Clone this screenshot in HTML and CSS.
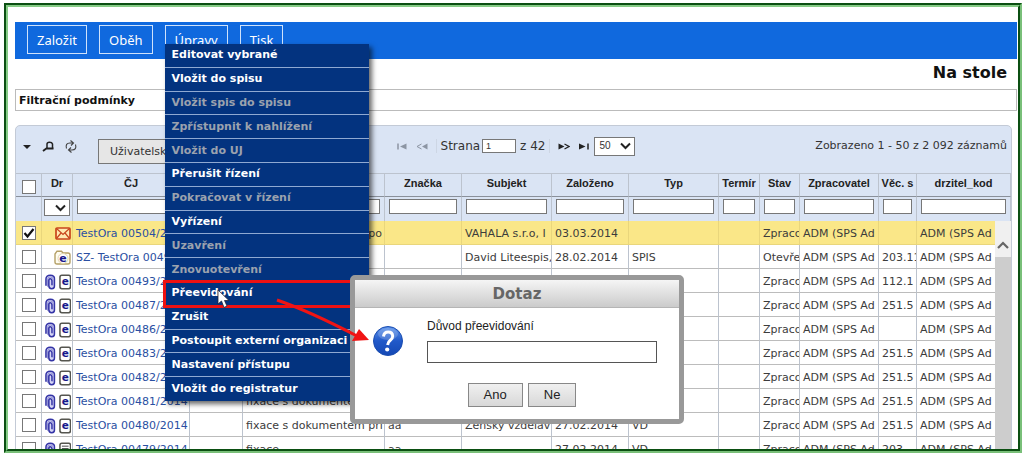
FILE: index.html
```html
<!DOCTYPE html>
<html lang="cs">
<head>
<meta charset="utf-8">
<title>Na stole</title>
<link rel="stylesheet" href="styles.css">
</head>
<body>
<svg class="defs" aria-hidden="true">
  <symbol id="clip" viewBox="0 0 11 16"><path d="M1 12V5Q1 1 5.500 1T10 5V12Q10 15 7 15T4 12V6.500Q4 4.500 5.500 4.500T7.300 6.500V11.500" fill="#d5d5f5" stroke="#3434a6" stroke-width="1.600"/><path d="M2.600 13V5.500Q2.600 2.700 5.500 2.700T8.600 5.500V12" fill="none" stroke="#7c7ccb" stroke-width=".8"/></symbol>
  <symbol id="edoc" viewBox="0 0 13 16"><rect x="1" y="1" width="11" height="14" rx="2" fill="#fff" stroke="#55554f" stroke-width="1.600"/><text x="6.500" y="11.500" class="glyph-e">e</text></symbol>
  <symbol id="paper" viewBox="0 0 13 16"><rect x="1" y="1" width="11" height="14" rx="2" fill="#fff" stroke="#55554f" stroke-width="1.600"/><path d="M3 4h7M3 6.500h7M3 9h7M3 11.500h5" stroke="#444"/></symbol>
  <symbol id="folder" viewBox="0 0 17 15"><path d="M1 12V4L3 1.200H7.500L9 3H14Q16 3 16 5V12Q16 14 14 14H3Q1 14 1 12Z" fill="#fffdf2" stroke="#b5a066" stroke-width="1.400"/><circle cx="9" cy="8.500" r="5" fill="#fff" stroke="#e0d5ae"/><text x="9" y="12" class="glyph-e">e</text></symbol>
  <symbol id="mail" viewBox="0 0 16 13"><rect x="1" y="1" width="14" height="11" rx="1" fill="#ffe9b0" stroke="#c8451c" stroke-width="1.700"/><path d="M1.500 1.500L8 7.500L14.500 1.500M1.500 11.500L6 6M14.500 11.500L10 6" fill="none" stroke="#c8451c" stroke-width="1.200"/></symbol>
</svg>

<div class="frame">
<main class="page">
  <nav class="bar">
    <button class="bar-btn">Založit</button>
    <button class="bar-btn">Oběh</button>
    <div class="drop">
      <button class="bar-btn" aria-expanded="true">Úpravy</button>
      <div class="menu">
        <button>Editovat vybrané</button>
        <button>Vložit do spisu</button>
        <button disabled>Vložit spis do spisu</button>
        <button disabled>Zpřístupnit k nahlížení</button>
        <button disabled>Vložit do UJ</button>
        <button>Přerušit řízení</button>
        <button disabled>Pokračovat v řízení</button>
        <button>Vyřízení</button>
        <button disabled>Uzavření</button>
        <button disabled>Znovuotevření</button>
        <button class="current">Přeevidování</button>
        <button>Zrušit</button>
        <button>Postoupit externí organizaci</button>
        <button>Nastavení přístupu</button>
        <button>Vložit do registratur</button>
      </div>
    </div>
    <button class="bar-btn">Tisk</button>
  </nav>
  <h1 class="title">Na stole</h1>
  <div class="conditions">Filtrační podmínky</div>

  <section class="grid">
    <div class="tools">
      <div class="tools-left">
        <button class="icon" aria-label="Nabídka"><svg width="10" height="6" viewBox="0 0 10 6"><path d="M1 1h8L5 5z" fill="#222"/></svg></button>
        <button class="icon" aria-label="Hledat"><svg width="13" height="11" viewBox="0 0 13 11"><path d="M5 7.500V3Q5 1.200 7.500 1.200T10.500 3V7.500" fill="none" stroke="#222" stroke-width="1.500"/><path d="M4.500 7.500H11.500M5 7L1 10" fill="none" stroke="#222" stroke-width="1.900"/></svg></button>
        <button class="icon" aria-label="Obnovit"><svg width="12" height="13" viewBox="0 0 12 13"><path d="M1.500 8.500Q0 3 5 3H8M5.500 .5L8.500 3L6 5.500M10.500 4.500Q12 10 7 10H4M6.500 12.500L3.500 10L6 7.500" fill="none" stroke="#444" stroke-width="1.100"/></svg></button>
        <button class="view-btn">Uživatelské</button>
      </div>
      <div class="pager">
        <button class="icon" disabled aria-label="První"><svg width="11" height="7" viewBox="0 0 11 7"><path d="M1 .5v6" stroke="#8c95a3" stroke-width="1.500"/><path d="M9.500 .5v6L3 3.500z" fill="#8c95a3"/></svg></button>
        <button class="icon" disabled aria-label="Předchozí"><svg width="12" height="7" viewBox="0 0 12 7"><path d="M5.500 1L1 3.500L5.500 6" fill="none" stroke="#8c95a3"/><path d="M11.500 .5v6L6 3.500z" fill="#8c95a3"/></svg></button>
        <label class="page-no">Strana <input value="1"></label>
        <span class="page-count">z 42</span>
        <button class="icon" aria-label="Další"><svg width="12" height="7" viewBox="0 0 12 7"><path d="M6.500 1L11 3.500L6.500 6" fill="none" stroke="#222" stroke-width="1.200"/><path d="M.5 .5v6L6.500 3.500z" fill="#222"/></svg></button>
        <button class="icon" aria-label="Poslední"><svg width="11" height="7" viewBox="0 0 11 7"><path d="M10 .5v6" stroke="#222" stroke-width="1.500"/><path d="M1 .5v6L7.500 3.500z" fill="#222"/></svg></button>
        <select class="size" aria-label="Počet na stránku"><option>50</option></select>
      </div>
      <div class="tools-right">Zobrazeno 1 - 50 z 2 092 záznamů</div>
    </div>

    <div class="table-wrap">
    <table class="data">
      <colgroup><col class="c-chk"><col class="c-dr"><col class="c-cj"><col class="c-a"><col class="c-b"><col class="c-m"><col class="c-l"><col class="c-m"><col class="c-l"><col class="c-ter"><col class="c-stav"><col class="c-zpr"><col class="c-vec"><col></colgroup>
      <thead>
        <tr><th><input type="checkbox" aria-label="Vybrat vše"></th><th>Dr</th><th>ČJ</th><th></th><th></th><th>Značka</th><th>Subjekt</th><th>Založeno</th><th>Typ</th><th>Termír</th><th>Stav</th><th>Zpracovatel</th><th>Věc. s</th><th>drzitel_kod</th></tr>
        <tr class="filters"><td></td><td><select aria-label="Dr"><option></option></select></td><td><input aria-label="ČJ"></td><td><input aria-label="Filtr"></td><td><input aria-label="Filtr"></td><td><input aria-label="Značka"></td><td><input aria-label="Subjekt"></td><td><input aria-label="Založeno"></td><td><input aria-label="Typ"></td><td><input aria-label="Termín"></td><td><input aria-label="Stav"></td><td><input aria-label="Zpracovatel"></td><td><input aria-label="Věc"></td><td><input aria-label="drzitel_kod"></td></tr>
      </thead>
      <tbody>
        <tr class="selected"><td><input type="checkbox" checked aria-label="Vybrat"></td><td><div class="icons"><svg width="16" height="13"><use href="#mail"/></svg></div></td><td><a href="#">TestOra 00504/2014</a></td><td></td><td>fixace s dokumentem po</td><td></td><td>VAHALA s.r.o, I</td><td>03.03.2014</td><td></td><td></td><td>Zpraco</td><td>ADM (SPS Ad</td><td></td><td>ADM (SPS Ad</td></tr>
        <tr><td><input type="checkbox" aria-label="Vybrat"></td><td><div class="icons"><svg width="17" height="15"><use href="#folder"/></svg></div></td><td><a href="#">SZ- TestOra 00494</a></td><td></td><td></td><td></td><td>David Liteespis,</td><td>28.02.2014</td><td>SPIS</td><td></td><td>Otevře</td><td>ADM (SPS Ad</td><td>203.11</td><td>ADM (SPS Ad</td></tr>
        <tr><td><input type="checkbox" aria-label="Vybrat"></td><td><div class="icons"><svg width="11" height="16"><use href="#clip"/></svg><svg width="13" height="16"><use href="#edoc"/></svg></div></td><td><a href="#">TestOra 00493/2014</a></td><td></td><td></td><td></td><td></td><td></td><td></td><td></td><td>Zpraco</td><td>ADM (SPS Ad</td><td>112.1</td><td>ADM (SPS Ad</td></tr>
        <tr><td><input type="checkbox" aria-label="Vybrat"></td><td><div class="icons"><svg width="11" height="16"><use href="#clip"/></svg><svg width="13" height="16"><use href="#edoc"/></svg></div></td><td><a href="#">TestOra 00487/2014</a></td><td></td><td></td><td></td><td></td><td></td><td></td><td></td><td>Zpraco</td><td>ADM (SPS Ad</td><td>251.5</td><td>ADM (SPS Ad</td></tr>
        <tr><td><input type="checkbox" aria-label="Vybrat"></td><td><div class="icons"><svg width="11" height="16"><use href="#clip"/></svg><svg width="13" height="16"><use href="#edoc"/></svg></div></td><td><a href="#">TestOra 00486/2014</a></td><td></td><td></td><td></td><td></td><td></td><td></td><td></td><td>Zpraco</td><td>ADM (SPS Ad</td><td></td><td>ADM (SPS Ad</td></tr>
        <tr><td><input type="checkbox" aria-label="Vybrat"></td><td><div class="icons"><svg width="11" height="16"><use href="#clip"/></svg><svg width="13" height="16"><use href="#edoc"/></svg></div></td><td><a href="#">TestOra 00483/2014</a></td><td></td><td></td><td></td><td></td><td></td><td></td><td></td><td>Zpraco</td><td>ADM (SPS Ad</td><td>251.5</td><td>ADM (SPS Ad</td></tr>
        <tr><td><input type="checkbox" aria-label="Vybrat"></td><td><div class="icons"><svg width="11" height="16"><use href="#clip"/></svg><svg width="13" height="16"><use href="#edoc"/></svg></div></td><td><a href="#">TestOra 00482/2014</a></td><td></td><td></td><td></td><td></td><td></td><td></td><td></td><td>Zpraco</td><td>ADM (SPS Ad</td><td>251.5</td><td>ADM (SPS Ad</td></tr>
        <tr><td><input type="checkbox" aria-label="Vybrat"></td><td><div class="icons"><svg width="11" height="16"><use href="#clip"/></svg><svg width="13" height="16"><use href="#edoc"/></svg></div></td><td><a href="#">TestOra 00481/2014</a></td><td></td><td>fixace s dokumentem</td><td></td><td></td><td></td><td></td><td></td><td>Zpraco</td><td>ADM (SPS Ad</td><td>251.5</td><td>ADM (SPS Ad</td></tr>
        <tr><td><input type="checkbox" aria-label="Vybrat"></td><td><div class="icons"><svg width="11" height="16"><use href="#clip"/></svg><svg width="13" height="16"><use href="#edoc"/></svg></div></td><td><a href="#">TestOra 00480/2014</a></td><td></td><td>fixace s dokumentem při</td><td>aa</td><td>Ženský vzděláv</td><td>27.02.2014</td><td>VD</td><td></td><td>Zpraco</td><td>ADM (SPS Ad</td><td>251.5</td><td>ADM (SPS Ad</td></tr>
        <tr><td><input type="checkbox" aria-label="Vybrat"></td><td><div class="icons"><svg width="11" height="16"><use href="#clip"/></svg><svg width="13" height="16"><use href="#paper"/></svg></div></td><td><a href="#">TestOra 00479/2014</a></td><td></td><td>fixace</td><td>aa</td><td></td><td>27.02.2014</td><td>VD</td><td></td><td>Zpraco</td><td>ADM (SPS Ad</td><td>203</td><td>ADM (SPS Ad</td></tr>
      </tbody>
    </table>
    <div class="scroll"><svg width="12" height="8" viewBox="0 0 12 8"><path d="M1 7L6 2L11 7" fill="none" stroke="#666" stroke-width="2.200"/></svg></div>
    </div>
  </section>
</main>

<form class="dialog" role="dialog" aria-labelledby="dlg-title">
  <h2 id="dlg-title">Dotaz</h2>
  <div class="dialog-body">
    <svg class="question" width="30" height="30" viewBox="0 0 30 30" aria-hidden="true">
      <defs><linearGradient id="ball" x1="0" y1="0" x2="0" y2="1"><stop offset="0" stop-color="#5d93ea"/><stop offset=".5" stop-color="#2159c9"/><stop offset="1" stop-color="#1448b4"/></linearGradient></defs>
      <circle cx="15" cy="15" r="14.500" fill="url(#ball)" stroke="#1b4db0"/>
      <ellipse cx="15" cy="8" rx="10" ry="6" fill="#fff" opacity=".18"/>
      <path d="M10.500 10.500Q11 6 15.200 6T19.700 10Q19.700 12.500 17.300 14.300Q15 16 14.600 19" fill="none" stroke="#fff" stroke-width="3"/>
      <circle cx="14.200" cy="23.500" r="2.100" fill="#fff"/>
    </svg>
    <div class="field"><label for="reason">Důvod přeevidování</label><input id="reason"></div>
  </div>
  <div class="actions"><button type="button">Ano</button><button type="button">Ne</button></div>
</form>

<svg class="arrow" width="98" height="48" viewBox="0 0 98 48" aria-hidden="true"><path d="M2 2Q34 13 82 38" fill="none" stroke="#f01414" stroke-width="3"/><path d="M77 43L84 31L94 42Z" fill="#f01414"/></svg>
<svg class="cursor" width="13" height="20" viewBox="0 0 13 20" aria-hidden="true"><path d="M1 1V15L4.500 12L7 18.500L10 17L7.500 11.500H12Z" fill="#fff" stroke="#223" stroke-width=".8"/></svg>
</div>
</body>
</html>
```
FILE: styles.css
```css
* { box-sizing: border-box; }
body {
  margin: 0;
  padding: 3px 2px 2px 4px;
  height: 100vh;
  overflow: hidden;
  background: #fff;
  color: #333;
  font: 11px/14px "DejaVu Sans", Verdana, sans-serif;
}
button, input, select { font: inherit; color: inherit; border-radius: 0; margin: 0; }
.defs { display: none; }
.glyph-e { font: bold 11px "DejaVu Sans", sans-serif; fill: #17178c; text-anchor: middle; }

.frame {
  position: relative;
  height: 100%;
  overflow: hidden;
  border: 2px solid;
  border-color: #0b4f12 #79bf79 #79bf79 #0b4f12;
}
.page {
  height: 100%;
  overflow: hidden;
  padding: 15px 1px 0 7px;
  border: 2px solid;
  border-color: #86cb86 #0b4f12 #0b4f12 #86cb86;
}

.bar {
  display: flex;
  align-items: center;
  gap: 12px;
  height: 37px;
  padding: 0 12px 2px;
  background: #1069de;
}
.bar-btn {
  display: block;
  height: 29px;
  padding: 0 9px;
  border: 1px solid #cfe2fb;
  background: transparent;
  color: #fff;
  font: 13px/20px "Noto Sans", sans-serif;
}
.drop { position: relative; }
.menu {
  position: absolute;
  z-index: 2;
  top: 19px;
  left: 0;
  width: 204px;
  height: 357px;
  display: grid;
  grid-auto-rows: 1fr;
  background: #03337f;
  box-shadow: 3px 3px 5px rgba(0, 0, 0, .6);
}
.menu button {
  padding: 0 0 0 7px;
  border: 0;
  border-bottom: 1px solid #8fa9d2;
  background: none;
  color: #fff;
  font-weight: bold;
  text-align: left;
  white-space: nowrap;
}
.menu button:last-child { border-bottom: 0; }
.menu button:disabled { color: #9ba2ae; }
.menu .current { outline: 3px solid #ee1111; outline-offset: -1px; }

.title {
  margin: 0;
  padding: 4px 10px 6px;
  text-align: right;
  font-size: 16px;
  line-height: 20px;
  color: #111;
}
.conditions {
  border: 1px solid #bbb;
  padding: 4px 3px;
  height: 22px;
  font-weight: bold;
  color: #111;
}

.grid {
  margin: 14px 5px 0 0;
  border: 1px solid #c3cad6;
  border-radius: 5px 5px 0 0;
  background: #dae4f4;
}
.tools {
  display: grid;
  grid-template-columns: 1fr auto 1fr;
  height: 47px;
  font-size: 12px;
}
.icon { display: flex; padding: 0; border: 0; background: none; }
.tools-left { display: flex; align-items: center; gap: 10px; padding: 0 6px 6px; }
.view-btn {
  height: 25px;
  margin: 10px 0 0 11px;
  padding: 0 11px;
  border: 1px solid #777;
  background: #e6e6e6;
  font-size: 11px;
}
.pager { display: flex; align-items: center; gap: 8px; padding: 0 0 7px 5px; }
.page-no { display: flex; align-items: center; gap: 2px; padding-left: 4px; border-left: 1px solid #cdd6e4; }
.page-no input { width: 34px; height: 14px; padding: 0 3px; border: 1px solid #777; background: #fff; font: 9px/12px "Liberation Sans", sans-serif; }
.page-count { padding-right: 4px; border-right: 1px solid #cdd6e4; margin-left: -4px; }
.size, .filters select {
  appearance: none;
  border: 1px solid #777;
  background: #fff url("data:image/svg+xml,%3Csvg xmlns='http://www.w3.org/2000/svg' width='11' height='8'%3E%3Cpath d='M1 1.500L5.500 6L10 1.500' fill='none' stroke='%23222' stroke-width='2'/%3E%3C/svg%3E") no-repeat right 3px center;
}
.size { width: 41px; height: 19px; margin-left: -3px; padding: 0 4px; font: 10px/14px "Liberation Sans", sans-serif; }
.tools-right { padding: 13px 4px 0 0; text-align: right; white-space: nowrap; font-size: 11px; }

.table-wrap { position: relative; }
.data { width: 100%; table-layout: fixed; border-collapse: separate; border-spacing: 0; }
.c-chk { width: 26px; }
.c-dr { width: 31px; }
.c-cj { width: 117px; }
.c-a { width: 53px; }
.c-b { width: 142px; }
.c-m { width: 77px; }
.c-l { width: 90px; }
.c-ter { width: 41px; }
.c-stav { width: 40px; }
.c-zpr { width: 79px; }
.c-vec { width: 38px; }
.data th, .data td {
  height: 24px;
  padding: 2px 0 0 3px;
  border-right: 1px solid #bcc3ce;
  overflow: hidden;
  white-space: nowrap;
  text-align: left;
}
.data th {
  padding: 0 0 4px;
  border-top: 1px solid #bcc3ce;
  border-bottom: 1px solid #8a909a;
  text-align: center;
  font: bold 11px/14px "Liberation Sans", Arial, sans-serif;
  color: #222;
}
.data th:first-child { padding: 4px 0 0; }
.data .filters td { vertical-align: top; padding: 2px 4px; }
.filters input { display: block; width: 100%; height: 15px; padding: 0; border: 1px solid #777; background: #fff; }
.data .filters td:nth-child(2) { padding: 2px; }
.filters select { display: block; width: 100%; height: 17px; }
.data tbody td { background: #fff; border-bottom: 1px solid #bcbcbc; color: #3c3c3c; }
.data tbody .selected td { background: #fae788; border-color: #e9d67c; }
.data a { color: #2a4fa2; text-decoration: none; }
.data tbody td:first-child { padding: 0; text-align: center; }
.data input[type="checkbox"] {
  appearance: none;
  display: block;
  width: 14px;
  height: 14px;
  margin: 0 auto;
  border: 1px solid #777;
  background: #fff;
}
.data input[type="checkbox"]:checked {
  background: #fff url("data:image/svg+xml,%3Csvg xmlns='http://www.w3.org/2000/svg' width='12' height='12'%3E%3Cpath d='M1.500 6L4.500 9.500L10.500 2' fill='none' stroke='%23111' stroke-width='2.200'/%3E%3C/svg%3E") no-repeat center;
}
.icons { display: flex; justify-content: flex-end; gap: 3px; margin-right: 1px; }
.scroll {
  position: absolute;
  top: 48px;
  right: 0;
  bottom: 0;
  width: 16px;
  padding: 18px 2px;
  background: linear-gradient(#f0f0f0 36px, #cdcdcd 36px);
}

.dialog {
  position: absolute;
  z-index: 3;
  top: 270px;
  left: 344px;
  width: 334px;
  height: 149px;
  border: 5px solid #999;
  border-radius: 5px;
  background: #fff;
  font: 12px/16px "Liberation Sans", Arial, sans-serif;
  color: #222;
}
.dialog h2 {
  margin: 0;
  height: 28px;
  border-bottom: 1px solid #b5b5b5;
  background: linear-gradient(#f5f5f5, #cbcbcb);
  font: bold 15px/28px "DejaVu Sans", Verdana, sans-serif;
  color: #666;
  text-align: center;
}
.dialog-body { display: flex; gap: 24px; padding: 10px 22px 0 18px; }
.question { margin-top: 8px; }
.field { flex: 1; }
.field label { display: block; margin-bottom: 7px; }
.field input { display: block; width: 100%; height: 22px; border: 1px solid #555; background: #fff; }
.actions { display: flex; justify-content: center; gap: 5px; padding: 20px 0 0 10px; }
.actions button { height: 24px; padding: 0 15px; border: 1px solid #888; background: linear-gradient(#f0f0f0, #d8d8d8); font-size: 13px; }

.arrow { position: absolute; z-index: 4; left: 269px; top: 293px; }
.cursor { position: absolute; z-index: 4; left: 211px; top: 284px; }
```
